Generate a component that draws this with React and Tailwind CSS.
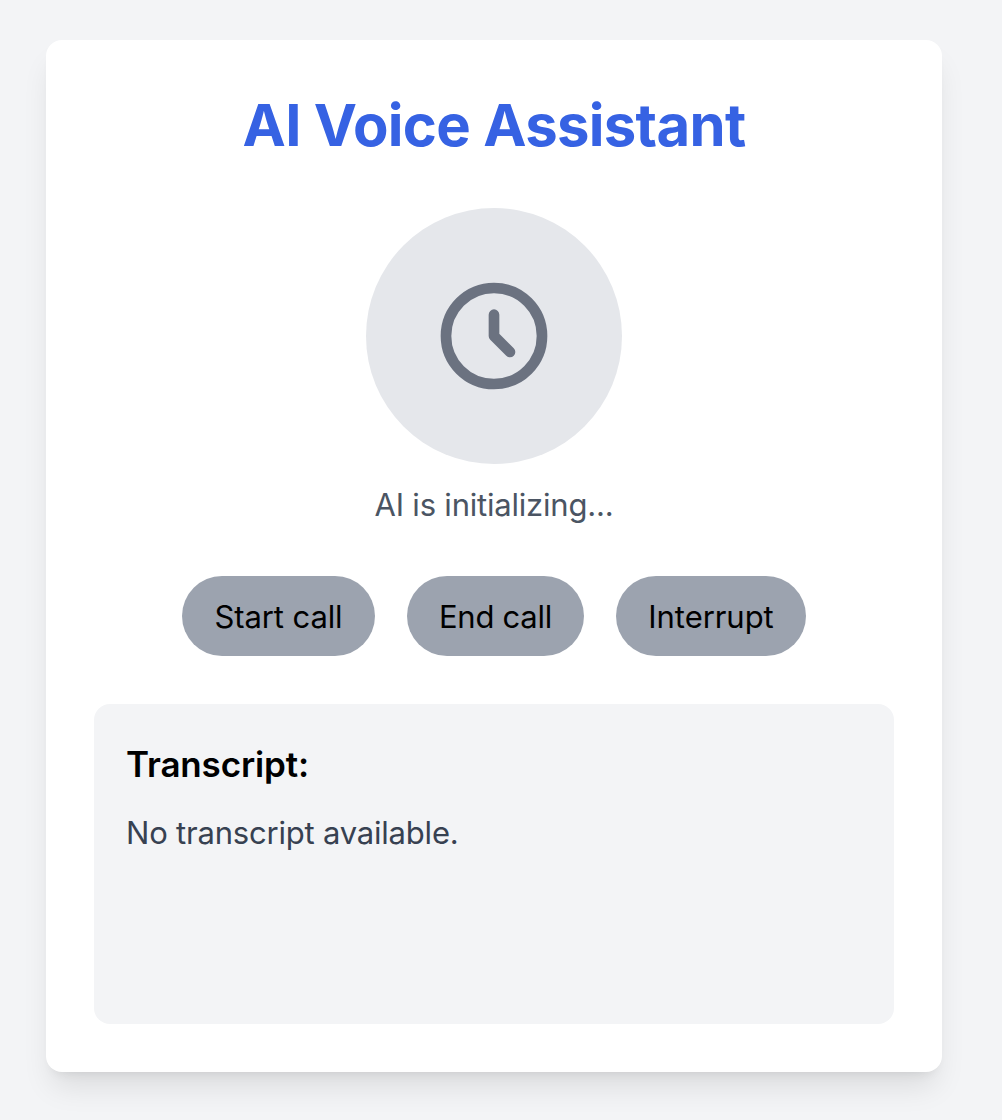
import React from 'react';

function ClockIcon() {
  return (
    <svg viewBox="0 0 24 24" fill="none" stroke="#6b7280" strokeWidth="2" strokeLinecap="round" strokeLinejoin="round" className="size-32">
      <path d="M12 8v4l3 3m6-3a9 9 0 11-18 0 9 9 0 0118 0z" />
    </svg>
  );
}

const buttons = [
  { label: 'Start call', style: 'w-[193px] tracking-[-0.1px]' },
  { label: 'End call', style: 'w-[177px] tracking-[-0.25px]' },
  { label: 'Interrupt', style: 'w-[190px] tracking-[-0.05px]' },
];

export default function App() {
  return (
    <div className="h-[1120px] w-[1002px] overflow-hidden bg-[#f3f4f6] pt-10 pl-[46px] font-['Inter',sans-serif] text-black">
      <main className="flex h-[1032px] w-[896px] flex-col items-center rounded-2xl bg-white p-12 shadow-[0_20px_30px_-6px_rgba(0,0,0,0.1),0_8px_12px_-8px_rgba(0,0,0,0.1)]">
        <h1 className="h-[72px] text-[58px] leading-[74px] font-bold tracking-[-0.68px] whitespace-nowrap text-[#3662e3]">AI Voice Assistant</h1>
        <div className="mt-12 flex size-64 shrink-0 items-center justify-center rounded-full bg-[#e5e7eb]">
          <ClockIcon />
        </div>
        <p className="mt-4 h-12 text-[31px] leading-[50px] tracking-[-0.2px] whitespace-nowrap text-[#4b5563]">AI is initializing...</p>
        <div className="mt-12 flex gap-8">
          {buttons.map((b) => (
            <button key={b.label} className={`flex h-20 items-center justify-center rounded-full bg-[#9ca3af] pt-0.5 text-[31px] leading-[48px] whitespace-nowrap ${b.style}`}>
              {b.label}
            </button>
          ))}
        </div>
        <section className="mt-12 h-80 w-[800px] rounded-2xl bg-[#f3f4f6] p-8">
          <h2 className="h-14 text-[35px] leading-[56px] font-semibold tracking-[-0.15px]">Transcript:</h2>
          <p className="mt-4 text-[31px] leading-[50px] tracking-[-0.2px] text-[#374151]">No transcript available.</p>
        </section>
      </main>
    </div>
  );
}
